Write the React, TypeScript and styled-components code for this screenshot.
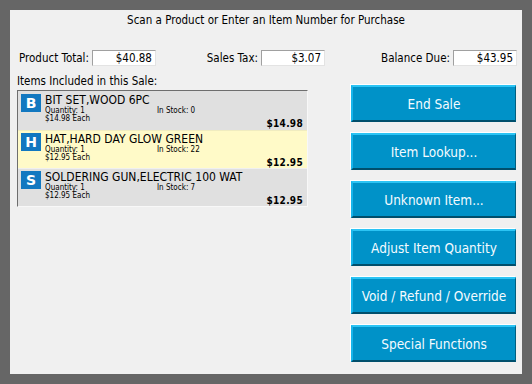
import React from "react";
import styled, { createGlobalStyle } from "styled-components";

const GlobalStyle = createGlobalStyle`
  html, body {
    margin: 0;
    padding: 0;
    background: #666666;
  }
  body {
    font-family: "DejaVu Sans Condensed", "DejaVu Sans", Tahoma, sans-serif;
    font-stretch: condensed;
    color: #000;
  }
`;

const Page = styled.div`
  width: 532px;
  height: 384px;
  padding: 10px 10px 10px 10px;
  box-sizing: border-box;
  background: #666666;
`;

const Window = styled.div`
  width: 512px;
  height: 364px;
  background: #f0f0f0;
  display: flex;
  flex-direction: column;
`;

const Title = styled.div`
  height: 20px;
  padding-top: 2px;
  text-align: center;
  font-size: 11.5px;
  line-height: 17px;
`;

const Totals = styled.div`
  margin-top: 18px;
  display: grid;
  grid-template-columns: 137px 169px 1fr;
  padding: 0 5px 0 9px;
  height: 16px;
`;

const Field = styled.div<{ $align: "start" | "end" }>`
  justify-self: ${(p) => p.$align};
  display: flex;
  align-items: center;
  gap: 3px;
  font-size: 11.5px;
  white-space: nowrap;
`;

const ValueBox = styled.div`
  width: 64px;
  height: 16px;
  box-sizing: border-box;
  background: #fff;
  border: 1px solid #fff;
  border-top-color: #a0a0a0;
  border-left-color: #a0a0a0;
  border-right-color: #e3e3e3;
  border-bottom-color: #e3e3e3;
  text-align: right;
  padding-right: 3px;
  font-size: 11.5px;
  line-height: 14px;
`;

const Body = styled.div`
  display: flex;
  padding: 0 6px 0 7px;
  margin-top: 8px;
  gap: 43px;
`;

const LeftCol = styled.div`
  width: 291px;
  display: flex;
  flex-direction: column;
`;

const ListLabel = styled.div`
  font-size: 11.5px;
  line-height: 14px;
  height: 15px;
  white-space: nowrap;
`;

const ItemList = styled.div`
  margin-top: 1px;
  border: 1px solid #f8f8f8;
  border-top-color: #6e6e6e;
  border-left-color: #6e6e6e;
  background: #e0e0e0;
  display: flex;
  flex-direction: column;
`;

const Row = styled.div<{ $selected?: boolean }>`
  display: flex;
  gap: 4px;
  padding: 2px 4px 1px 3px;
  height: 38px;
  box-sizing: border-box;
  background: ${(p) => (p.$selected ? "#fffac8" : "#e0e0e0")};
  border-top: 1px solid ${(p) => (p.$selected ? "#f0ecc0" : "#f0f0f0")};
  &:first-child {
    border-top: none;
    height: 39px;
    padding-top: 3px;
  }
`;

const Badge = styled.div`
  width: 20px;
  height: 18px;
  flex: none;
  background: #1278c0;
  color: #fff;
  font-family: "DejaVu Sans", Tahoma, sans-serif;
  font-stretch: normal;
  font-weight: bold;
  font-size: 14px;
  line-height: 18px;
  text-align: center;
`;

const Info = styled.div`
  flex: 1;
  display: grid;
  grid-template-columns: 112px 1fr auto;
  grid-template-rows: 13px 8px auto;
`;

const Name = styled.div`
  grid-column: 1 / 4;
  font-size: 12px;
  line-height: 13px;
  white-space: nowrap;
`;

const Small = styled.div`
  font-size: 8px;
  line-height: 8px;
  white-space: nowrap;
`;

const Price = styled.div`
  grid-column: 3;
  grid-row: 3;
  align-self: end;
  font-size: 10px;
  font-weight: bold;
  line-height: 12px;
  margin-top: 3px;
  letter-spacing: 0.3px;
`;

const Buttons = styled.div`
  display: flex;
  flex-direction: column;
  gap: 11px;
  margin-top: 11px;
`;

const ActionButton = styled.button`
  width: 165px;
  height: 37px;
  box-sizing: border-box;
  background: #0092c8;
  color: #f4fbff;
  border-style: solid;
  border-width: 2px 1px 2px 2px;
  border-color: #2cc4f4 #005f80 #004f6c #18b4ea;
  box-shadow: -1px -1px 0 #ffffff;
  font-family: inherit;
  font-stretch: condensed;
  font-size: 13.5px;
  padding: 0;
  cursor: pointer;
`;

type Item = {
  letter: string;
  name: string;
  qty: number;
  stock: number;
  each: string;
  total: string;
  selected?: boolean;
};

const items: Item[] = [
  { letter: "B", name: "BIT SET,WOOD 6PC", qty: 1, stock: 0, each: "$14.98", total: "$14.98" },
  { letter: "H", name: "HAT,HARD DAY GLOW GREEN", qty: 1, stock: 22, each: "$12.95", total: "$12.95", selected: true },
  { letter: "S", name: "SOLDERING GUN,ELECTRIC 100 WAT", qty: 1, stock: 7, each: "$12.95", total: "$12.95" },
];

const actions = [
  "End Sale",
  "Item Lookup...",
  "Unknown Item...",
  "Adjust Item Quantity",
  "Void / Refund / Override",
  "Special Functions",
];

export default function App() {
  return (
    <Page>
      <GlobalStyle />
      <Window>
        <Title>Scan a Product or Enter an Item Number for Purchase</Title>
        <Totals>
          <Field $align="start">
            Product Total:<ValueBox>$40.88</ValueBox>
          </Field>
          <Field $align="end">
            Sales Tax:<ValueBox>$3.07</ValueBox>
          </Field>
          <Field $align="end">
            Balance Due:<ValueBox>$43.95</ValueBox>
          </Field>
        </Totals>
        <Body>
          <LeftCol>
            <ListLabel>Items Included in this Sale:</ListLabel>
            <ItemList>
              {items.map((it) => (
                <Row key={it.letter} $selected={it.selected}>
                  <Badge>{it.letter}</Badge>
                  <Info>
                    <Name>{it.name}</Name>
                    <Small>Quantity: {it.qty}</Small>
                    <Small>In Stock: {it.stock}</Small>
                    <Small />
                    <Small>{it.each} Each</Small>
                    <Small />
                    <Price>{it.total}</Price>
                  </Info>
                </Row>
              ))}
            </ItemList>
          </LeftCol>
          <Buttons>
            {actions.map((a) => (
              <ActionButton key={a}>{a}</ActionButton>
            ))}
          </Buttons>
        </Body>
      </Window>
    </Page>
  );
}
